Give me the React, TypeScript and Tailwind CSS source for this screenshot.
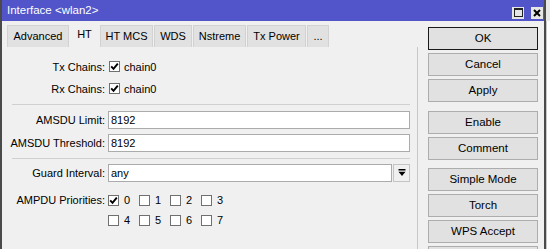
import React from "react";

const font = { fontFamily: '"Liberation Sans", Arial, sans-serif' };

function Check({ checked }: { checked?: boolean }) {
  return (
    <span className="inline-flex h-[11px] w-[11px] shrink-0 items-center justify-center border border-[#707070] bg-white">
      {checked && (
        <svg width="9" height="9" viewBox="0 0 9 9">
          <path d="M1.2 4.4 L3.5 6.8 L7.8 1.6" stroke="#000" strokeWidth="1.9" fill="none" />
        </svg>
      )}
    </span>
  );
}

function Row({ label, children, className = "" }: { label: string; children?: React.ReactNode; className?: string }) {
  return (
    <div className={"flex h-[18px] items-center " + className}>
      <div className="w-[95px] shrink-0 whitespace-nowrap text-right">{label}</div>
      <div className="ml-[3px] flex h-full flex-1 items-center">{children}</div>
    </div>
  );
}

function Tab({ label, w, active }: { label: string; w: string; active?: boolean }) {
  return active ? (
    <div className={"flex h-[25px] items-center justify-center bg-[#f0f0f0] " + w}>{label}</div>
  ) : (
    <div className={"flex h-[22px] items-center justify-center border border-b-0 border-[#d2d2d2] bg-[#e1e1e1] " + w}>{label}</div>
  );
}

function Btn({ label, focus }: { label: string; focus?: boolean }) {
  return (
    <div
      className={
        "flex h-[23px] w-[110px] shrink-0 items-center justify-center bg-[#e1e1e1] text-[11.5px] " +
        (focus ? "border border-[#1a1a1a]" : "border border-[#adadad]")
      }
    >
      {label}
    </div>
  );
}

function Prio({ n, checked }: { n: number; checked?: boolean }) {
  return (
    <div className="flex w-[31px] shrink-0 items-center">
      <Check checked={checked} />
      <span className="ml-[5px]">{n}</span>
    </div>
  );
}

export default function App() {
  return (
    <div className="flex h-[249px] w-[550px] overflow-hidden bg-white text-[11px] text-black" style={font}>
      <div className="flex h-full w-[546px] shrink-0 flex-col border-x-2 border-[#4a4a4a] bg-[#f0f0f0]">
        {/* title bar */}
        <div className="flex h-[21px] shrink-0 items-center bg-[#5155c9] pl-[5px] pr-[1px] text-white">
          <span className="text-[11.5px]">Interface &lt;wlan2&gt;</span>
          <div className="mb-[-4px] ml-auto flex gap-[7px]">
            <span className="flex h-[12px] w-[12px] items-center justify-center bg-[#e6e6e6]">
              <span className="h-[9px] w-[9px] border border-t-2 border-[#222]" />
            </span>
            <span className="flex h-[12px] w-[12px] items-center justify-center bg-[#e6e6e6]">
              <svg width="8" height="8" viewBox="0 0 8 8">
                <path d="M1 1 L7 7 M7 1 L1 7" stroke="#000" strokeWidth="2" />
              </svg>
            </span>
          </div>
        </div>

        <div className="flex min-h-0 flex-1">
          {/* left: tabs + panel */}
          <div className="flex w-[416px] shrink-0 flex-col">
            <div className="flex h-[26px] shrink-0 items-end gap-[1px] pl-[5px]">
              <Tab label="Advanced" w="w-[62px]" />
              <Tab label="HT" w="w-[29px]" active />
              <Tab label="HT MCS" w="w-[53px]" />
              <Tab label="WDS" w="w-[38px]" />
              <Tab label="Nstreme" w="w-[53px]" />
              <Tab label="Tx Power" w="w-[59px]" />
              <Tab label="..." w="w-[22px]" />
            </div>
            <div className="flex flex-1 flex-col border-r border-[#c8c8c8] pl-[8px] pr-[7px] pt-[11px]">
              <Row label="Tx Chains:">
                <span className="ml-[1px]"><Check checked /></span>
                <span className="ml-[4px]">chain0</span>
              </Row>
              <Row label="Rx Chains:" className="mt-[4px]">
                <span className="ml-[1px]"><Check checked /></span>
                <span className="ml-[4px]">chain0</span>
              </Row>
              <div className="ml-[2px] mt-[6px] h-px shrink-0 bg-[#d0d0d0]" />
              <Row label="AMSDU Limit:" className="mt-[6px]">
                <div className="flex h-full flex-1 items-center border border-[#ababab] bg-white pl-[2px]">8192</div>
              </Row>
              <Row label="AMSDU Threshold:" className="mt-[5px]">
                <div className="flex h-full flex-1 items-center border border-[#ababab] bg-white pl-[2px]">8192</div>
              </Row>
              <div className="ml-[2px] mt-[6px] h-px shrink-0 bg-[#d0d0d0]" />
              <Row label="Guard Interval:" className="mt-[5px]">
                <div className="flex h-full flex-1 items-center border border-[#ababab] bg-white pl-[2px]">any</div>
                <div className="ml-[1px] flex h-full w-[17px] items-center justify-center border border-[#c4c4c4] bg-[#f0f0f0]">
                  <svg width="8" height="8" viewBox="0 0 8 8">
                    <rect x="0.5" y="0" width="7" height="1.5" fill="#000" />
                    <path d="M0.5 2.8 L7.5 2.8 L4 7 Z" fill="#000" />
                  </svg>
                </div>
              </Row>
              <Row label="AMPDU Priorities:" className="mt-[9px]">
                <Prio n={0} checked />
                <Prio n={1} />
                <Prio n={2} />
                <Prio n={3} />
              </Row>
              <Row label="" className="mt-[2px]">
                <Prio n={4} />
                <Prio n={5} />
                <Prio n={6} />
                <Prio n={7} />
              </Row>
            </div>
          </div>

          {/* right: buttons */}
          <div className="ml-[10px] flex flex-col pt-[6px]">
            <div className="flex flex-col gap-[3px]">
              <Btn label="OK" focus />
              <Btn label="Cancel" />
              <Btn label="Apply" />
            </div>
            <div className="mt-[9px] flex flex-col gap-[3px]">
              <Btn label="Enable" />
              <Btn label="Comment" />
            </div>
            <div className="mt-[8px] flex flex-col gap-[3px]">
              <Btn label="Simple Mode" />
              <Btn label="Torch" />
              <Btn label="WPS Accept" />
              <Btn label="" />
            </div>
          </div>
        </div>
      </div>
      <div className="flex h-full w-[4px] flex-col">
        <div className="h-[21px] bg-[#e8e8e8]" />
        <div className="flex-1 border-l border-[#c8c8c8] bg-white" />
      </div>
    </div>
  );
}
